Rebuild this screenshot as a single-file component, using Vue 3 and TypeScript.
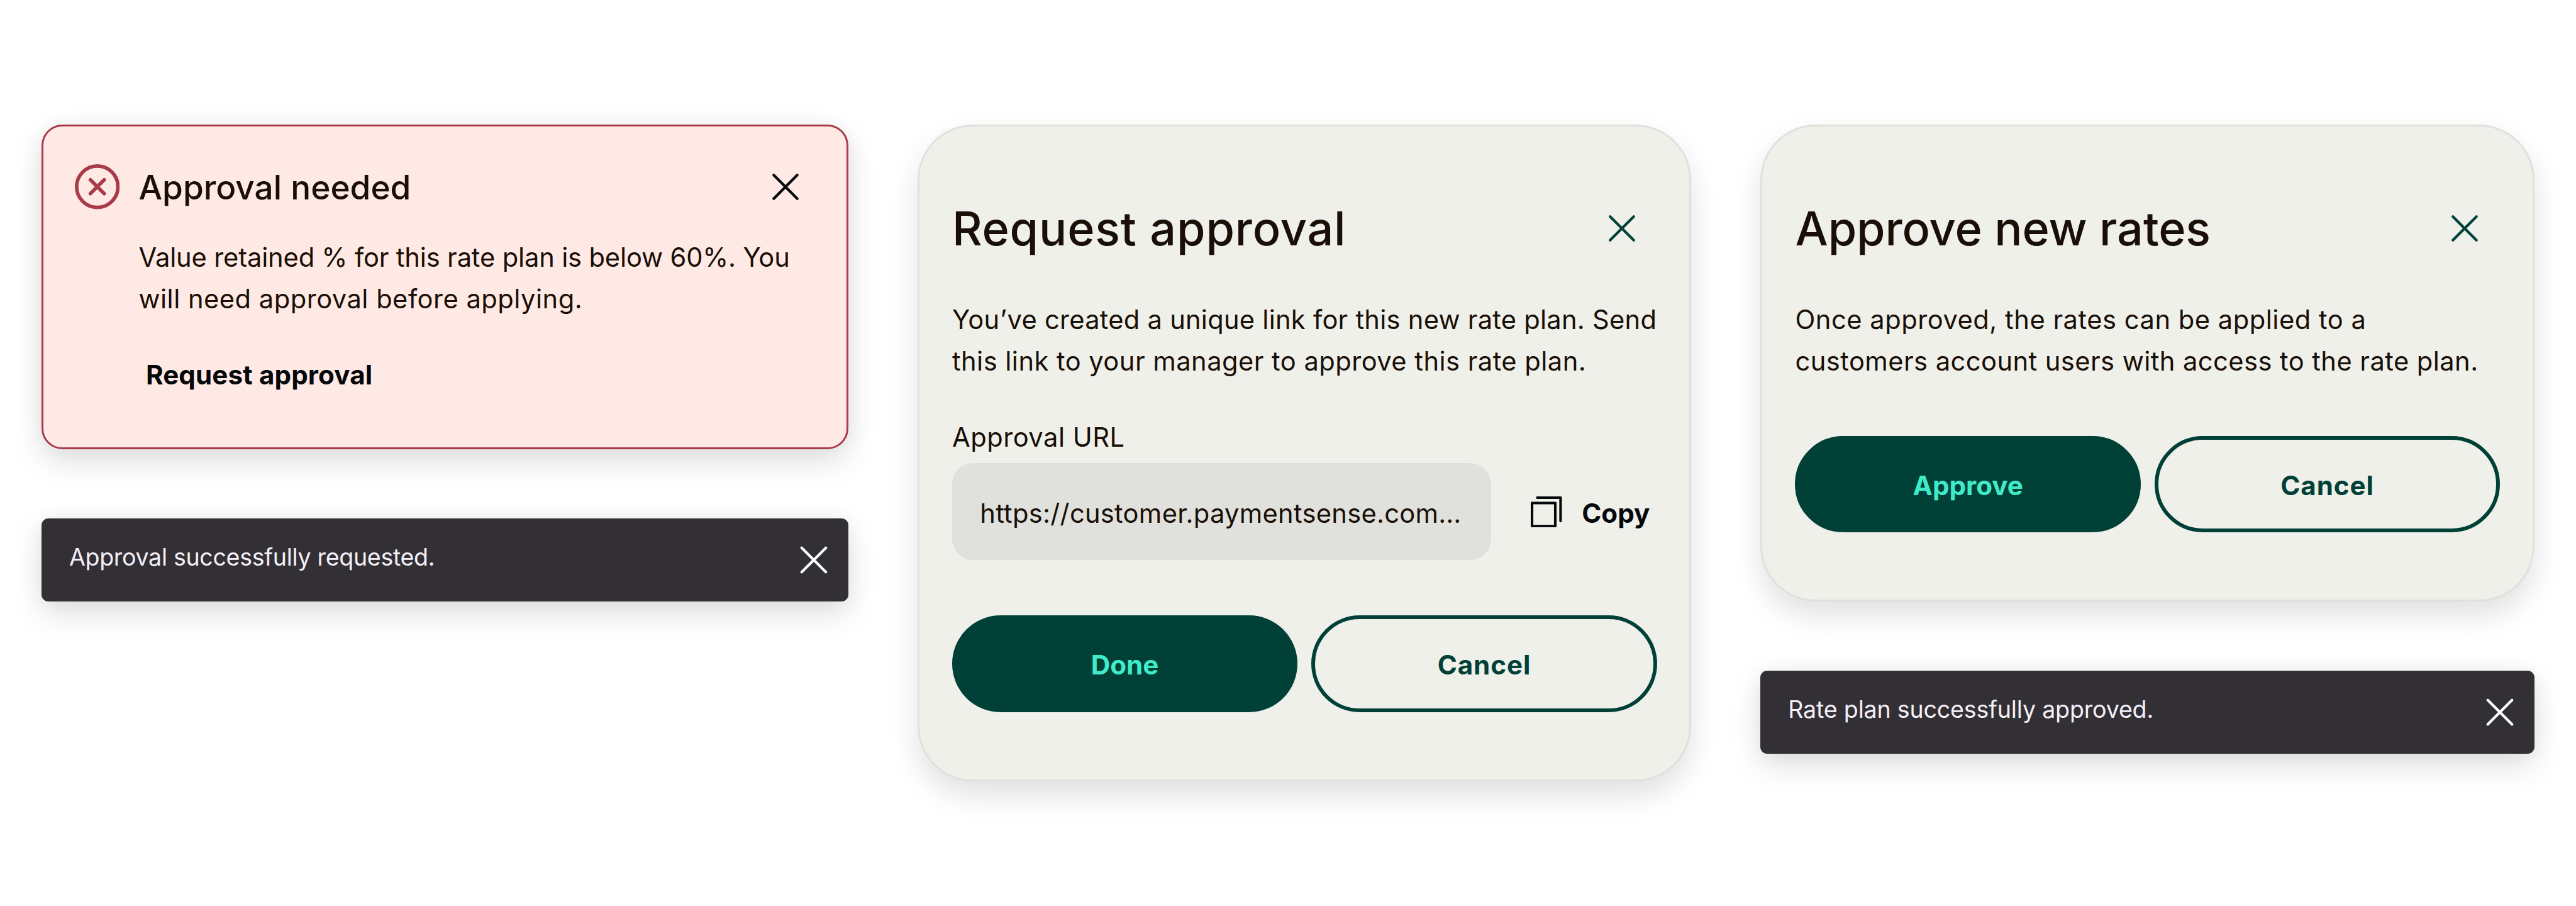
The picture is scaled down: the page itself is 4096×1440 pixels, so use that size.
<script setup lang="ts">
interface Line {
  text: string
  tracking: number
}

const alertLines: Line[] = [
  { text: 'Value retained % for this rate plan is below 60%. You', tracking: -0.0017 },
  { text: 'will need approval before applying.', tracking: 0.0053 },
]
const requestLines: Line[] = [
  { text: 'You’ve created a unique link for this new rate plan. Send', tracking: 0.0027 },
  { text: 'this link to your manager to approve this rate plan.', tracking: 0.0051 },
]
const approveLines: Line[] = [
  { text: 'Once approved, the rates can be applied to a', tracking: 0.0056 },
  { text: 'customers account users with access to the rate plan.', tracking: 0.0048 },
]
</script>

<template>
  <main class="board">
    <section class="column column-wide">
      <article class="alert">
        <header class="alert-head">
          <svg class="alert-icon" viewBox="0 0 78 78" fill="none">
            <circle cx="39" cy="39" r="35.9" stroke="currentColor" stroke-width="6.2" />
            <path d="M27 27L51 51M51 27L27 51" stroke="currentColor" stroke-width="6.2" stroke-linecap="round" />
          </svg>
          <h2 class="alert-title">Approval needed</h2>
          <svg class="close" viewBox="0 0 48 48" fill="none">
            <path d="M3.6 3.6L44.4 44.4M44.4 3.6L3.6 44.4" stroke="currentColor" stroke-width="4.7" stroke-linecap="round" />
          </svg>
        </header>
        <p class="alert-body">
          <span v-for="line in alertLines" :key="line.text" class="line" :style="{ letterSpacing: line.tracking + 'rem' }">{{ line.text }}</span>
        </p>
        <button class="text-button" type="button">Request approval</button>
      </article>

      <div class="toast">
        <span class="toast-text tight">Approval successfully requested.</span>
        <svg class="close" viewBox="0 0 48 48" fill="none">
          <path d="M3 3L45 45M45 3L3 45" stroke="currentColor" stroke-width="4.5" stroke-linecap="round" />
        </svg>
      </div>
    </section>

    <section class="column">
      <article class="modal modal-request">
        <header class="modal-head">
          <h1 class="modal-title loose">Request approval</h1>
          <svg class="close" viewBox="0 0 48 48" fill="none">
            <path d="M3.5 3.5L44.5 44.5M44.5 3.5L3.5 44.5" stroke="currentColor" stroke-width="4.6" stroke-linecap="round" />
          </svg>
        </header>
        <p class="modal-body">
          <span v-for="line in requestLines" :key="line.text" class="line" :style="{ letterSpacing: line.tracking + 'rem' }">{{ line.text }}</span>
        </p>
        <label class="field-label">Approval URL</label>
        <div class="field-row">
          <div class="field">https://customer.paymentsense.com…</div>
          <button class="copy" type="button">
            <svg class="copy-icon" viewBox="0 0 54 54" fill="none" stroke="currentColor" stroke-width="4.5" stroke-linecap="round" stroke-linejoin="round">
              <rect x="2.2" y="11.4" width="40.4" height="40.4" />
              <path d="M11.3 2.2H51.8V42.7" />
            </svg>
            <span>Copy</span>
          </button>
        </div>
        <div class="actions actions-request">
          <button class="btn btn-fill" type="button">Done</button>
          <button class="btn btn-line" type="button">Cancel</button>
        </div>
      </article>
    </section>

    <section class="column">
      <article class="modal modal-approve">
        <header class="modal-head">
          <h1 class="modal-title">Approve new rates</h1>
          <svg class="close" viewBox="0 0 48 48" fill="none">
            <path d="M3.5 3.5L44.5 44.5M44.5 3.5L3.5 44.5" stroke="currentColor" stroke-width="4.6" stroke-linecap="round" />
          </svg>
        </header>
        <p class="modal-body">
          <span v-for="line in approveLines" :key="line.text" class="line" :style="{ letterSpacing: line.tracking + 'rem' }">{{ line.text }}</span>
        </p>
        <div class="actions actions-approve">
          <button class="btn btn-fill" type="button">Approve</button>
          <button class="btn btn-line" type="button">Cancel</button>
        </div>
      </article>

      <div class="toast">
        <span class="toast-text">Rate plan successfully approved.</span>
        <svg class="close" viewBox="0 0 48 48" fill="none">
          <path d="M3 3L45 45M45 3L3 45" stroke="currentColor" stroke-width="4.5" stroke-linecap="round" />
        </svg>
      </div>
    </section>
  </main>
</template>

<style>
/* 100 design units per rem; the board is 44.73rem wide */
html {
  font-size: calc(100vw / 44.73);
  background: #fff;
  overflow: hidden;
}
</style>

<style scoped>
.board {
  box-sizing: border-box;
  display: flex;
  align-items: flex-start;
  gap: 1.2rem;
  width: 44.73rem;
  height: 15.72rem;
  padding: 2.16rem 0.72rem 0;
  background: #fff;
  color: #190f06;
  font-family: Inter, "Liberation Sans", sans-serif;
  font-size: 0.455rem;
  line-height: 0.72rem;
}
.column {
  display: flex;
  flex-direction: column;
  flex: none;
  gap: 1.2rem;
  width: 13.44rem;
}
.column-wide {
  width: 14.01rem;
}
h1,
h2,
p {
  margin: 0;
  font-weight: 500;
}
p {
  font-weight: 400;
}
button {
  margin: 0;
  padding: 0;
  border: 0;
  background: none;
  font-family: inherit;
  font-size: 0.46rem;
  font-weight: 700;
  line-height: 0.72rem;
  color: #05080a;
}
.line {
  display: block;
  white-space: nowrap;
}
.close {
  display: block;
  flex: none;
  width: 0.48rem;
  height: 0.48rem;
  margin-left: auto;
}

.alert {
  box-sizing: border-box;
  height: 5.64rem;
  padding: 0.66rem 0.815rem 0 0.545rem;
  border: 3px solid #a83b4a;
  border-radius: 0.36rem;
  background: #ffe9e4;
  box-shadow: 0 0.2rem 0.54rem rgba(0, 0, 0, 0.13), 0 0 0.36rem rgba(0, 0, 0, 0.04);
}
.alert-head {
  display: flex;
  align-items: center;
  height: 0.78rem;
}
.alert-head .close {
  color: #05080a;
}
.alert-icon {
  display: block;
  width: 0.78rem;
  height: 0.78rem;
  color: #a83b4a;
}
.alert-title {
  padding-top: 0.035rem;
  margin-left: 0.33rem;
  font-size: 0.58rem;
  line-height: 0.78rem;
  white-space: nowrap;
}
.alert-body {
  margin: 0.482rem 0 0 1.11rem;
}
.text-button {
  display: block;
  margin: 0.595rem 0 0 1.235rem;
  letter-spacing: 0.0013rem;
}

.toast {
  box-sizing: border-box;
  display: flex;
  align-items: center;
  height: 1.44rem;
  padding: 0 0.36rem 0 0.48rem;
  border-radius: 0.12rem;
  background: #322f35;
  color: #fff;
  box-shadow: 0 0.2rem 0.54rem rgba(0, 0, 0, 0.13), 0 0 0.36rem rgba(0, 0, 0, 0.04);
}
.toast-text {
  padding-bottom: 0.08rem;
  color: #f5eff7;
  font-size: 0.41rem;
  line-height: 0.6rem;
  letter-spacing: -0.0018rem;
  white-space: nowrap;
}
.toast-text.tight {
  letter-spacing: -0.0033rem;
}

.modal {
  box-sizing: border-box;
  padding: 1.29rem 0.57rem 0;
  border: 3px solid #e0e1dc;
  border-radius: 0.96rem;
  background: #eff0ea;
  box-shadow: 0 0.24rem 0.5rem rgba(0, 0, 0, 0.12);
}
.modal-request {
  height: 11.4rem;
}
.modal-approve {
  height: 8.28rem;
}
.modal-head {
  display: flex;
  align-items: center;
  height: 0.96rem;
  padding-right: 0.365rem;
}
.modal-head .close {
  color: #004036;
}
.modal-title {
  padding-top: 0.03rem;
  font-size: 0.805rem;
  line-height: 0.94rem;
  letter-spacing: -0.001rem;
  white-space: nowrap;
}
.modal-title.loose {
  letter-spacing: 0.0092rem;
}
.modal-body {
  margin-top: 0.755rem;
}
.field-label {
  display: block;
  margin-top: 0.604rem;
  letter-spacing: 0.0055rem;
}
.field-row {
  display: flex;
  align-items: center;
  margin-top: 0.081rem;
}
.field {
  box-sizing: border-box;
  width: 9.36rem;
  height: 1.68rem;
  padding: 0.515rem 0.485rem 0.445rem;
  border-radius: 0.36rem;
  background: #e0e1dc;
  letter-spacing: 0.003rem;
  white-space: nowrap;
}
.copy {
  display: flex;
  align-items: center;
  margin-left: 0.69rem;
}
.copy-icon {
  display: block;
  width: 0.54rem;
  height: 0.54rem;
}
.copy span {
  padding-top: 0.05rem;
  margin-left: 0.345rem;
}
.actions {
  display: flex;
  gap: 0.24rem;
}
.actions-request {
  margin-top: 0.96rem;
}
.actions-approve {
  margin-top: 0.925rem;
}
.btn {
  box-sizing: border-box;
  flex: none;
  width: 6rem;
  height: 1.68rem;
  padding-top: 0.045rem;
  border: 6px solid #004036;
  border-radius: 0.84rem;
}
.btn-fill {
  background: #004036;
  color: #3febc9;
}
.btn-line {
  color: #004036;
  letter-spacing: 0.01rem;
}
</style>
